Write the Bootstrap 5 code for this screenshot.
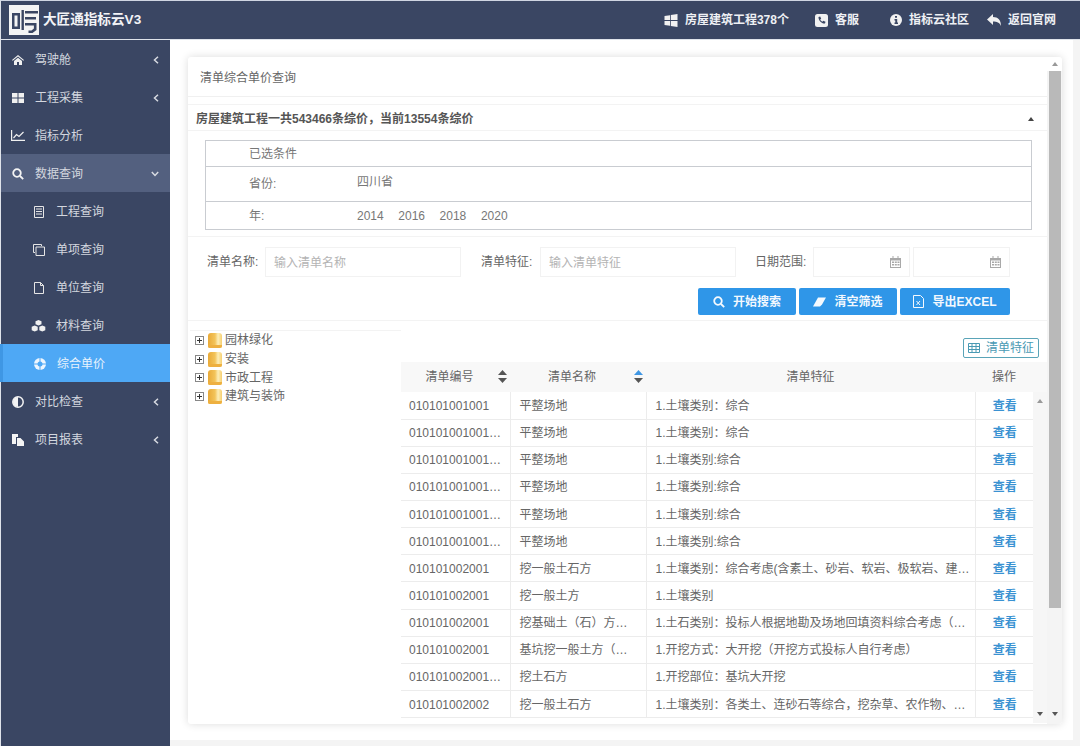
<!DOCTYPE html>
<html lang="zh"><head><meta charset="utf-8"><title>大匠通指标云V3</title>
<link href="https://cdn.jsdelivr.net/npm/bootstrap@5.3.0/dist/css/bootstrap.min.css" rel="stylesheet">
<style>
html,body{height:746px;overflow:hidden}
body{font-family:"Liberation Sans","Noto Sans CJK SC",sans-serif;font-size:12px;color:#666;background:#f4f4f4}
.shell{width:1080px;height:746px}
.topbar{height:40px;background:#3a4663;border-top:1px solid #cfd5e2;border-left:1px solid #dfe3ea;border-bottom:1px solid #dfe3ea;padding:0 24px 0 8px;color:#fff;flex:none}
.brand{font-size:13.6px;font-weight:700;color:#f2f3f6;gap:4px}
.toplinks span{font-weight:700;color:#eef0f4;font-size:12px}
.toplinks div{gap:7px}
.gap27{margin-left:26px}
.gap31{margin-left:31px}
.gap18{margin-left:18px}
.sidemenu{width:170px;flex:none;background:#3a4663;height:706px;border-left:1px solid #dfe3ea}
.sidemenu a{height:38px;color:#d3d7df;text-decoration:none;padding:1px 11px 0 10px;gap:10px}
.sidemenu a.sub{padding-left:31px;gap:10px}
.sidemenu a.cube{padding-left:29px;gap:10px}
.cube .ico{width:16px!important}
.sidemenu a.open{background:#53607f}
.sidemenu a.on{background:#4ea8f5;border-left:3px solid #3f97e4;margin-left:-1px;padding-left:30px;color:#e8f3fd}
.sidemenu .ico{width:14px;display:flex;justify-content:center}
.mainarea{width:903px;height:700px;background:#fff;padding:17px 11px 16px 18px;flex:none}
.sheet{width:874px;height:667px;background:#fff;box-shadow:0 0 8px rgba(0,0,0,.14);border-radius:3px;overflow:hidden}
.sheetbody{width:859px;flex:none}
.titlerow{height:40px;padding:2px 12px 0;border-bottom:1px solid #f0f0f0;color:#666}
.sumrow{margin-top:7px;height:27px;border-top:1px solid #f3f3f3;border-bottom:1px solid #f3f3f3;padding:2px 8px 0;font-weight:700;color:#555}
.caret-up{width:0;height:0;border:3px solid transparent;border-bottom:4px solid #444;border-top:0;margin-right:5px}
.condbox{margin:9px 15px 0 17px;border:1px solid #c9ccd1;color:#777}
.condrow{padding-left:43px;align-items:center;border-bottom:1px solid #c9ccd1}
.condrow:last-child{border-bottom:0}
.condrow label{width:108px;margin:0}
.condrow i{font-style:normal;margin-right:14.6px}
.filters{margin-top:6px;border-top:1px solid #f3f3f3;padding:10px 0 0 19px;height:41px}
.filters .form-control{height:30px;border:1px solid #f2f2f2;border-radius:0;font-size:12px;padding:1px 8px 0;color:#666;width:196px;flex:none}
.filters .form-control::placeholder{color:#b4b4b4}
.filters label{margin:5px 0 0;line-height:20px;color:#666;white-space:nowrap;width:51px;flex:none}
.after7{margin-left:7px}
.after8{margin-left:8px}
.before20{margin-left:20px!important}
.before19{margin-left:19px!important}
.datebox{width:97px;height:30px;border:1px solid #f2f2f2;padding-right:8px;flex:none}
.datenext{margin-left:3px}
.actions{padding:11px 37px 0 0;gap:3px;border-bottom:1px solid #f3f3f3;height:44px}
.actions .btn{height:27px;padding:0;background:#2f96e8;border:0;border-radius:2px;color:#f2f8fe;font-size:12px;font-weight:700;gap:8px;width:98px}
.actions .btn.wide{width:110px}
.lowpart{height:404px}
.treepane{width:213px;flex:none;padding:9px 0 0 2px}
.treepane ul{border-top:1px solid #f3f3f3;padding:0 0 0 5px;margin:0;list-style:none;width:211px}
.treepane li{height:18.7px;color:#666;font-size:12px}
.folder{margin-left:4px;margin-right:3px}
.tablepane{width:646px;flex:none}
.specbtn{height:20px;width:76px;border:1px solid #5aa4b8;border-radius:2px;padding:0;color:#4a9ab4;font-size:12px;margin:17px 8px 4px auto;gap:6px;background:#fff}
.gridwrap{width:646px}
.datatable{width:632px;table-layout:fixed;margin:0;font-size:12px;color:#666;flex:none}
.datatable th{height:30px;background:#f8f8f8;font-weight:400;border:0;text-align:center;padding:0;vertical-align:middle;color:#666;position:relative}
.datatable td{height:27.15px;padding:1px 8px 0;border:0;border-bottom:1px solid #ececec;border-right:1px solid #ececec;vertical-align:middle;white-space:nowrap;overflow:hidden;text-overflow:ellipsis;color:#666}
.datatable td:nth-child(2){padding-left:9px}
.datatable td:nth-child(3){padding:1px 2px 0 9px}
.datatable td:last-child{border-right:0;text-align:center;color:#3a92d2;font-weight:700;padding:1px 0 0 1px}
.sorter{position:absolute;right:3px;top:8px}
.th1{width:109px;padding-right:12px!important}
.th2{width:136px;padding-right:12px!important}
.th3{width:329px}
.innerbar{width:14px;flex:none}
.innerhead{height:30px;background:#f8f8f8}
.innertrack{height:331px;background:#f6f6f6;padding:7px 0}
.tri-up,.tri-dn{width:0;height:0;border:3px solid transparent}
.tri-up{border-bottom:4px solid #999;border-top:0}
.tri-dn{border-top:4px solid #555;border-bottom:0}
.outerbar{width:15px;flex:none;background:#f4f4f4}
.outertop{height:14px;background:#fff}
.outerthumb{height:537px;width:12px;background:#b9b9b9}
</style></head><body>
<svg width="0" height="0" class="d-block"><defs><linearGradient id="fold" x1="0" y1="0" x2="1" y2="0"><stop offset="0" stop-color="#e9aa38"/><stop offset=".5" stop-color="#f3c45a"/><stop offset=".72" stop-color="#fdeeb8"/><stop offset="1" stop-color="#f6cf70"/></linearGradient></defs></svg>
<div class="shell d-flex flex-column">
<header class="topbar d-flex align-items-center justify-content-between">
 <div class="brand d-flex align-items-center">
  <svg width="30" height="30" viewBox="0 0 30 30"><rect x="0" y="0" width="30" height="30" fill="#f4f4f4"/><path d="M3 8h8v16H3z M5.500 10.500v11h3v-11z" fill="#3a4663" fill-rule="evenodd"/><path d="M12.500 5h2.400v20h-2.400z" fill="#3a4663"/><path d="M16 6h13v2.500H16zM16 12h11v2.500h-11zM16 18h11.500v7l-4 3h-4v-2.500h3l2.400-2v-3H16z" fill="#3a4663"/></svg>
  <span>大匠通指标云V3</span>
 </div>
 <div class="toplinks d-flex align-items-center">
  <div class="d-flex align-items-center"><svg width="14" height="13" viewBox="0 0 13 13" fill="#f1f1f1"><path d="M0 2l5.500-.8V6H0zM6.300 1.100L13 0v6H6.300zM0 7h5.500v4.800L0 11zM6.300 7H13v6l-6.700-1z"/></svg><span>房屋建筑工程378个</span></div>
  <div class="gap27 d-flex align-items-center"><svg width="13" height="13" viewBox="0 0 13 13"><rect width="13" height="13" rx="2.500" fill="#f1f1f1"/><path d="M3.500 3l1.700-.5 1 2.200-1 .9c.4 1 1.200 1.800 2.200 2.200l.9-1 2.200 1-.5 1.700c-3.200.4-6.800-3.200-6.500-6.500z" fill="#3a4663"/></svg><span>客服</span></div>
  <div class="gap31 d-flex align-items-center"><svg width="12" height="12" viewBox="0 0 12 12"><circle cx="6" cy="6" r="6" fill="#f1f1f1"/><path d="M5 2h2v1.700H5zM4.500 5h2.700v3.500H8V10H4.500V8.500h.8v-2h-.8z" fill="#3a4663"/></svg><span>指标云社区</span></div>
  <div class="gap18 d-flex align-items-center"><svg width="14" height="12" viewBox="0 0 14 12" fill="#f1f1f1"><path d="M6 0v3c5 0 8 3 8 9-1.500-3.500-4-4.500-8-4.500V11L0 5.500z"/></svg><span>返回官网</span></div>
 </div>
</header>
<div class="d-flex flex-grow-1">
<nav class="sidemenu d-flex flex-column">
 <a href="#" class="d-flex align-items-center"><span class="ico"><svg width="12" height="10" viewBox="0 0 12 10" fill="#f0f0f0"><path d="M6 0l6 5-.7.800L6 1.500.7 5.800 0 5zM2 6l4-3.300L10 6v4H7V7H5v3H2z"/></svg></span><span>驾驶舱</span><svg class="ms-auto" width="6" height="8" viewBox="0 0 6 8" fill="none" stroke="#d8dbe2" stroke-width="1.500"><path d="M5 .8L1.500 4 5 7.200"/></svg></a>
 <a href="#" class="d-flex align-items-center"><span class="ico"><svg width="12" height="10" viewBox="0 0 12 10" fill="#f0f0f0"><path d="M0 0h5.500v4.500H0zM6.500 0H12v4.500H6.500zM0 5.500h5.500V10H0zM6.500 5.500H12V10H6.500z"/></svg></span><span>工程采集</span><svg class="ms-auto" width="6" height="8" viewBox="0 0 6 8" fill="none" stroke="#d8dbe2" stroke-width="1.500"><path d="M5 .8L1.500 4 5 7.200"/></svg></a>
 <a href="#" class="d-flex align-items-center"><span class="ico"><svg width="14" height="11" viewBox="0 0 14 11" fill="none" stroke="#f0f0f0" stroke-width="1.200"><path d="M.6 0v10.400H14"/><path d="M2.500 8l3-3.500 2.500 2L12.500 2"/></svg></span><span>指标分析</span></a>
 <a href="#" class="open d-flex align-items-center"><span class="ico"><svg width="12" height="12" viewBox="0 0 12 12" fill="none" stroke="#f4f4f4" stroke-width="1.800"><circle cx="5" cy="5" r="3.800"/><path d="M8 8l3.200 3.200"/></svg></span><span>数据查询</span><svg class="ms-auto" width="8" height="6" viewBox="0 0 8 6" fill="none" stroke="#d8dbe2" stroke-width="1.500"><path d="M.8 1L4 4.500 7.200 1"/></svg></a>
 <a href="#" class="sub d-flex align-items-center"><span class="ico"><svg width="10" height="12" viewBox="0 0 10 12" fill="none" stroke="#e6e6e6" stroke-width="1"><path d="M.5.500h9v11h-9zM2 3h6M2 5.500h6M2 8h6"/></svg></span><span>工程查询</span></a>
 <a href="#" class="sub d-flex align-items-center"><span class="ico"><svg width="12" height="12" viewBox="0 0 12 12" fill="none" stroke="#e6e6e6" stroke-width="1"><path d="M8.500 2V.5h-8v8H2"/><path d="M3 3h8.500v8.500H3z"/></svg></span><span>单项查询</span></a>
 <a href="#" class="sub d-flex align-items-center"><span class="ico"><svg width="10" height="12" viewBox="0 0 10 12" fill="none" stroke="#e6e6e6" stroke-width="1"><path d="M.5.500h6l3 3v8h-9zM6.500.5v3h3"/></svg></span><span>单位查询</span></a>
 <a href="#" class="sub cube d-flex align-items-center"><span class="ico"><svg width="15" height="12" viewBox="0 0 15 12" fill="#f0f0f0"><path d="M7.500 0l3 1.300v3L7.500 5.600l-3-1.300v-3zM3.700 5.500l3 1.300v3.400l-3 1.300-3-1.300V6.800zM11.300 5.500l3 1.300v3.400l-3 1.300-3-1.300V6.800z"/></svg></span><span>材料查询</span></a>
 <a href="#" class="sub on d-flex align-items-center"><span class="ico"><svg width="12" height="12" viewBox="0 0 12 12"><circle cx="6" cy="6" r="6" fill="#eef6fe"/><circle cx="6" cy="6" r="2.500" fill="#4ea8f5"/><path d="M0 6h12M6 0v12" stroke="#4ea8f5" stroke-width="1"/></svg></span><span>综合单价</span></a>
 <a href="#" class="d-flex align-items-center"><span class="ico"><svg width="12" height="12" viewBox="0 0 12 12"><circle cx="6" cy="6" r="5.200" fill="none" stroke="#f4f4f4" stroke-width="1.500"/><path d="M6 1a5 5 0 0 0 0 10z" fill="#f4f4f4"/></svg></span><span>对比检查</span><svg class="ms-auto" width="6" height="8" viewBox="0 0 6 8" fill="none" stroke="#d8dbe2" stroke-width="1.500"><path d="M5 .8L1.500 4 5 7.200"/></svg></a>
 <a href="#" class="d-flex align-items-center"><span class="ico"><svg width="12" height="12" viewBox="0 0 12 12" fill="#f4f4f4"><path d="M0 0h6v3H4v7H0zM5 4h3.500L12 7.500V12H5z"/></svg></span><span>项目报表</span><svg class="ms-auto" width="6" height="8" viewBox="0 0 6 8" fill="none" stroke="#d8dbe2" stroke-width="1.500"><path d="M5 .8L1.500 4 5 7.200"/></svg></a>
</nav>
<main class="mainarea">
<div class="sheet d-flex">
 <div class="sheetbody">
  <div class="titlerow d-flex align-items-center">清单综合单价查询</div>
  <div class="sumrow d-flex align-items-center justify-content-between"><span>房屋建筑工程一共543466条综价，当前13554条综价</span><b class="caret-up"></b></div>
  <div class="condbox">
   <div class="condrow d-flex" style="height:26px"><label>已选条件</label></div>
   <div class="condrow d-flex" style="height:35px"><label>省份:</label><span class="pb-1">四川省</span></div>
   <div class="condrow d-flex" style="height:27px"><label>年:</label><span><i>2014</i><i>2016</i><i>2018</i><i>2020</i></span></div>
  </div>
  <form class="filters d-flex align-items-start">
   <label>清单名称:</label><input class="form-control after7" placeholder="输入清单名称">
   <label class="before20">清单特征:</label><input class="form-control after8" placeholder="输入清单特征">
   <label class="before19">日期范围:</label>
   <div class="datebox after7 d-flex align-items-center justify-content-end"><svg width="11" height="12" viewBox="0 0 11 12" fill="#a9a9a9"><path d="M0 2h2.500V0h1v2h4V0h1v2H11v10H0zM1 4.500v6.500h9V4.500zM2 5.500h2v1.500H2zM4.800 5.500h2v1.500h-2zM7.500 5.500h2v1.500h-2zM2 8h2v1.500H2zM4.800 8h2v1.500h-2zM7.500 8h2v1.500h-2z" fill-rule="evenodd"/></svg></div>
   <div class="datebox datenext d-flex align-items-center justify-content-end"><svg width="11" height="12" viewBox="0 0 11 12" fill="#a9a9a9"><path d="M0 2h2.500V0h1v2h4V0h1v2H11v10H0zM1 4.500v6.500h9V4.500zM2 5.500h2v1.500H2zM4.800 5.500h2v1.500h-2zM7.500 5.500h2v1.500h-2zM2 8h2v1.500H2zM4.800 8h2v1.500h-2zM7.500 8h2v1.500h-2z" fill-rule="evenodd"/></svg></div>
  </form>
  <div class="actions d-flex justify-content-end align-items-start">
   <button class="btn d-flex align-items-center justify-content-center"><svg width="12" height="12" viewBox="0 0 12 12" fill="none" stroke="#f4f9fe" stroke-width="1.800"><circle cx="5" cy="5" r="3.800"/><path d="M8 8l3.200 3.200"/></svg>开始搜索</button>
   <button class="btn d-flex align-items-center justify-content-center"><svg width="13" height="10" viewBox="0 0 13 10" fill="#f4f9fe"><path d="M5 .5h8L9 7.500 7 9.500H0z"/></svg>清空筛选</button>
   <button class="btn wide d-flex align-items-center justify-content-center"><svg width="11" height="13" viewBox="0 0 11 13" fill="none" stroke="#f4f9fe"><path d="M.5.500h7l3 3v9H.5zM3.500 6l3.500 4M7 6l-3.500 4"/></svg>导出EXCEL</button>
  </div>
  <div class="lowpart d-flex">
   <div class="treepane">
    <ul>
     <li class="d-flex align-items-center"><svg width="9" height="9" viewBox="0 0 9 9"><rect x=".5" y=".5" width="8" height="8" fill="#fff" stroke="#888"/><path d="M2 4.500h5M4.500 2v5" stroke="#333"/></svg><svg class="folder" width="14" height="15" viewBox="0 0 14 15"><path d="M0 3q0-3 3-3h8q3 0 3 3v10q0 2-2 2H2q-2 0-2-2z" fill="url(#fold)"/><path d="M0 12h14v1q0 2-2 2H2q-2 0-2-2z" fill="#eeb040"/></svg><span>园林绿化</span></li>
     <li class="d-flex align-items-center"><svg width="9" height="9" viewBox="0 0 9 9"><rect x=".5" y=".5" width="8" height="8" fill="#fff" stroke="#888"/><path d="M2 4.500h5M4.500 2v5" stroke="#333"/></svg><svg class="folder" width="14" height="15" viewBox="0 0 14 15"><path d="M0 3q0-3 3-3h8q3 0 3 3v10q0 2-2 2H2q-2 0-2-2z" fill="url(#fold)"/><path d="M0 12h14v1q0 2-2 2H2q-2 0-2-2z" fill="#eeb040"/></svg><span>安装</span></li>
     <li class="d-flex align-items-center"><svg width="9" height="9" viewBox="0 0 9 9"><rect x=".5" y=".5" width="8" height="8" fill="#fff" stroke="#888"/><path d="M2 4.500h5M4.500 2v5" stroke="#333"/></svg><svg class="folder" width="14" height="15" viewBox="0 0 14 15"><path d="M0 3q0-3 3-3h8q3 0 3 3v10q0 2-2 2H2q-2 0-2-2z" fill="url(#fold)"/><path d="M0 12h14v1q0 2-2 2H2q-2 0-2-2z" fill="#eeb040"/></svg><span>市政工程</span></li>
     <li class="d-flex align-items-center"><svg width="9" height="9" viewBox="0 0 9 9"><rect x=".5" y=".5" width="8" height="8" fill="#fff" stroke="#888"/><path d="M2 4.500h5M4.500 2v5" stroke="#333"/></svg><svg class="folder" width="14" height="15" viewBox="0 0 14 15"><path d="M0 3q0-3 3-3h8q3 0 3 3v10q0 2-2 2H2q-2 0-2-2z" fill="url(#fold)"/><path d="M0 12h14v1q0 2-2 2H2q-2 0-2-2z" fill="#eeb040"/></svg><span>建筑与装饰</span></li>
    </ul>
   </div>
   <div class="tablepane">
    <button class="btn specbtn d-flex align-items-center justify-content-center"><svg width="12" height="10" viewBox="0 0 12 10" fill="none" stroke="#4a9ab4"><path d="M.5.500h11v9H.5zM.5 3.500h11M.5 6.500h11M4 .5v9M8 .5v9"/></svg>清单特征</button>
    <div class="gridwrap d-flex align-items-start">
     <table class="table datatable">
      <thead><tr><th class="th1">清单编号<svg class="sorter" width="9" height="13" viewBox="0 0 9 13"><path d="M4.500 0L9 5H0z" fill="#555"/><path d="M4.500 13L9 8H0z" fill="#555"/></svg></th><th class="th2">清单名称<svg class="sorter" width="9" height="13" viewBox="0 0 9 13"><path d="M4.500 0L9 5H0z" fill="#3f97e4"/><path d="M4.500 13L9 8H0z" fill="#555"/></svg></th><th class="th3">清单特征</th><th>操作</th></tr></thead>
      <tbody>
       <tr><td>010101001001</td><td>平整场地</td><td>1.土壤类别：综合</td><td>查看</td></tr>
       <tr><td>010101001001001</td><td>平整场地</td><td>1.土壤类别：综合</td><td>查看</td></tr>
       <tr><td>010101001001002</td><td>平整场地</td><td>1.土壤类别:综合</td><td>查看</td></tr>
       <tr><td>010101001001003</td><td>平整场地</td><td>1.土壤类别:综合</td><td>查看</td></tr>
       <tr><td>010101001001004</td><td>平整场地</td><td>1.土壤类别:综合</td><td>查看</td></tr>
       <tr><td>010101001001005</td><td>平整场地</td><td>1.土壤类别:综合</td><td>查看</td></tr>
       <tr><td>010101002001</td><td>挖一般土石方</td><td>1.土壤类别：综合考虑(含素土、砂岩、软岩、极软岩、建筑垃圾等)</td><td>查看</td></tr>
       <tr><td>010101002001</td><td>挖一般土方</td><td>1.土壤类别</td><td>查看</td></tr>
       <tr><td>010101002001</td><td>挖基础土（石）方综合</td><td>1.土石类别：投标人根据地勘及场地回填资料综合考虑（含淤泥）</td><td>查看</td></tr>
       <tr><td>010101002001</td><td>基坑挖一般土方（综合）</td><td>1.开挖方式：大开挖（开挖方式投标人自行考虑）</td><td>查看</td></tr>
       <tr><td>010101002001001</td><td>挖土石方</td><td>1.开挖部位：基坑大开挖</td><td>查看</td></tr>
       <tr><td>010101002002</td><td>挖一般土石方</td><td>1.土壤类别：各类土、连砂石等综合，挖杂草、农作物、灌木及树根</td><td>查看</td></tr>
      </tbody>
     </table>
     <div class="innerbar d-flex flex-column">
      <div class="innerhead"></div>
      <div class="innertrack d-flex flex-column align-items-center justify-content-between"><b class="tri-up"></b><b class="tri-dn"></b></div>
     </div>
    </div>
   </div>
  </div>
 </div>
 <div class="outerbar d-flex flex-column align-items-center">
  <div class="outertop w-100 d-flex justify-content-center align-items-center"><b class="tri-up"></b></div>
  <div class="outerthumb"></div>
  <div class="mt-auto pb-2"><b class="tri-dn d-block"></b></div>
 </div>
</div>
</main>
</div>
</div>
</body></html>
